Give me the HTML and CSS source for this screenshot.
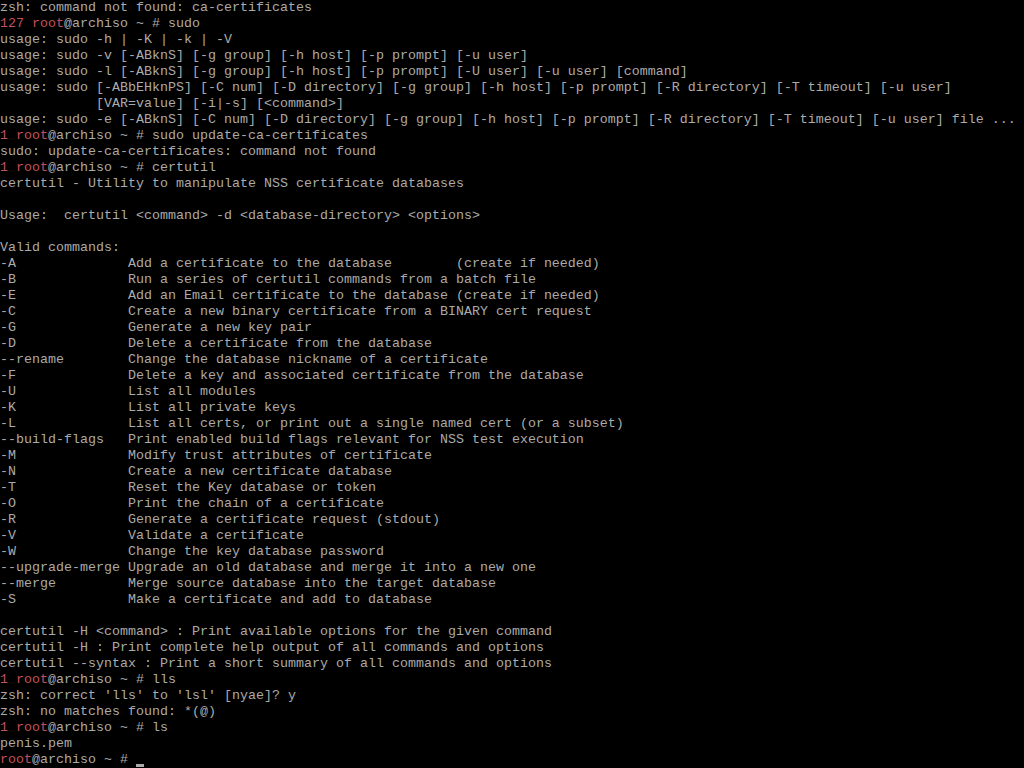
FILE: index.html
```html
<!DOCTYPE html>
<html>
<head>
<meta charset="utf-8">
<link rel="stylesheet" href="styles.css">
</head>
<body>
<pre class="tty">zsh: command not found: ca-certificates
<span class="r">127</span> <span class="r">root</span>@archiso ~ # sudo
usage: sudo -h | -K | -k | -V
usage: sudo -v [-ABknS] [-g group] [-h host] [-p prompt] [-u user]
usage: sudo -l [-ABknS] [-g group] [-h host] [-p prompt] [-U user] [-u user] [command]
usage: sudo [-ABbEHknPS] [-C num] [-D directory] [-g group] [-h host] [-p prompt] [-R directory] [-T timeout] [-u user]
            [VAR=value] [-i|-s] [&lt;command&gt;]
usage: sudo -e [-ABknS] [-C num] [-D directory] [-g group] [-h host] [-p prompt] [-R directory] [-T timeout] [-u user] file ...
<span class="r">1</span> <span class="r">root</span>@archiso ~ # sudo update-ca-certificates
sudo: update-ca-certificates: command not found
<span class="r">1</span> <span class="r">root</span>@archiso ~ # certutil
certutil - Utility to manipulate NSS certificate databases

Usage:  certutil &lt;command&gt; -d &lt;database-directory&gt; &lt;options&gt;

Valid commands:
-A              Add a certificate to the database        (create if needed)
-B              Run a series of certutil commands from a batch file
-E              Add an Email certificate to the database (create if needed)
-C              Create a new binary certificate from a BINARY cert request
-G              Generate a new key pair
-D              Delete a certificate from the database
--rename        Change the database nickname of a certificate
-F              Delete a key and associated certificate from the database
-U              List all modules
-K              List all private keys
-L              List all certs, or print out a single named cert (or a subset)
--build-flags   Print enabled build flags relevant for NSS test execution
-M              Modify trust attributes of certificate
-N              Create a new certificate database
-T              Reset the Key database or token
-O              Print the chain of a certificate
-R              Generate a certificate request (stdout)
-V              Validate a certificate
-W              Change the key database password
--upgrade-merge Upgrade an old database and merge it into a new one
--merge         Merge source database into the target database
-S              Make a certificate and add to database

certutil -H &lt;command&gt; : Print available options for the given command
certutil -H : Print complete help output of all commands and options
certutil --syntax : Print a short summary of all commands and options
<span class="r">1</span> <span class="r">root</span>@archiso ~ # lls
zsh: correct 'lls' to 'lsl' [nyae]? y
zsh: no matches found: *(@)
<span class="r">1</span> <span class="r">root</span>@archiso ~ # ls
penis.pem
<span class="r">root</span>@archiso ~ # <span class="cursor"></span></pre>
</body>
</html>
```

FILE: styles.css
```css
html, body {
  margin: 0;
  padding: 0;
  background: #000;
  width: 1024px;
  height: 768px;
  overflow: hidden;
}

.tty {
  margin: 0;
  padding: 0;
  font-family: "Liberation Mono", "DejaVu Sans Mono", monospace;
  font-size: 13.3333px;
  line-height: 16px;
  color: #aaaaaa;
  white-space: pre;
}

.r {
  color: #c0505f;
}

.cursor {
  display: inline-block;
  width: 8px;
  height: 16px;
  vertical-align: top;
  background: linear-gradient(to bottom, transparent 12px, #aaaaaa 12px, #aaaaaa 15px, transparent 15px);
}
```
